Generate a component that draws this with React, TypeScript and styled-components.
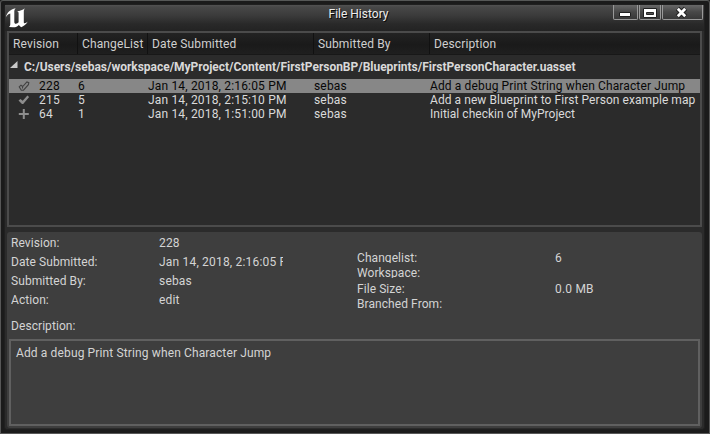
import React from 'react';
import styled, { createGlobalStyle, css } from 'styled-components';

const GlobalStyle = createGlobalStyle`
  * { box-sizing: border-box; }
  body { margin: 0; background: #1b1b1b; overflow: hidden; }
`;

const Window = styled.main`
  width: 710px;
  height: 434px;
  padding: 3px 4px 3px 3px;
  border: 1px solid #575757;
  border-top-color: #565857;
  border-radius: 3px 3px 0 0;
  background: #1b1b1b;
  color: #d4d4d4;
  font: 12px/14px Roboto, 'Liberation Sans', sans-serif;
  letter-spacing: 0.07px;
  white-space: nowrap;
`;

const Surface = styled.div`
  height: 426px;
  padding: 0 2px 1px 2px;
  border: 1px solid #202020;
  border-radius: 3px;
  background: #2b2b2b;
`;

const TitleBar = styled.header`
  display: grid;
  grid-template-columns: 1fr auto 1fr;
  height: 26px;
  margin: 0 -2px;
  background: linear-gradient(#525252 0, #484848 2px, #3a3a3a 11px, #292929 19px, #232323 100%);
`;

const Logo = styled.svg`
  width: 24px;
  height: 22px;
  margin: 2px 0 0 0;
`;

const Title = styled.h1`
  margin: 2px 0 0 8px;
  color: #ededed;
  font: inherit;
  letter-spacing: 0;
  text-shadow: 1px 1px 0 #080808;
`;

const WindowButtons = styled.div`
  display: flex;
  justify-self: end;
  gap: 1px;
  height: 16px;
  margin-right: 1px;
`;

const WindowButton = styled.button<{ $width: number }>`
  width: ${({ $width }) => $width}px;
  height: 15px;
  padding: 0;
  border: 1px solid #999;
  border-top: 0;
  border-radius: 0 0 2px 2px;
  background: linear-gradient(#686868, #484848 50%, #383838);
  svg { display: block; width: 100%; height: 14px; }
`;

const HistoryPanel = styled.section`
  height: 196px;
  border: 2px solid #4b4b4b;
  background: #2b2b2b;
`;

const columns = css`
  display: grid;
  grid-template-columns: 69px 70px 166px 116px 1fr;
`;

const TableHeader = styled.div`
  ${columns}
  height: 22px;
  border-bottom: 1px solid #181818;
  background: linear-gradient(#232323, #1a1a1a 55%, #1f1f1f);
`;

const HeaderCell = styled.div`
  padding: 4px 0 0 4px;
  border-right: 1px solid #111;
  color: #cfcfcf;
  letter-spacing: 0.13px;
  &:last-child { border-right: 0; }
`;

const FileGroup = styled.div`
  display: flex;
  height: 24px;
  padding: 5px 0 0 1px;
  color: #d9d9d9;
  font-weight: 700;
  letter-spacing: -0.02px;
  svg { width: 8px; height: 8px; margin: 1px 6px 0 0; }
`;

const HistoryRow = styled.div<{ $selected?: boolean }>`
  ${columns}
  height: 14px;
  background: ${({ $selected }) => ($selected ? '#878787' : 'transparent')};
  color: ${({ $selected }) => ($selected ? '#080808' : '#dadada')};
`;

const Cell = styled.div<{ $tracking?: number }>`
  letter-spacing: ${({ $tracking = 0.17 }) => $tracking}px;
`;

const RevisionCell = styled.div`
  display: flex;
  padding-left: 9px;
  gap: 9px;
  letter-spacing: 0.2px;
  svg { width: 12px; height: 13px; flex: none; }
`;

const DetailsPanel = styled.section`
  height: 196px;
  margin-top: 5px;
  padding: 1px 2px 2px;
  border-radius: 3px;
  background: #3e3e3e;
`;

const DetailColumns = styled.div`
  display: grid;
  grid-template-columns: 346px 1fr;
  height: 84px;
  padding-left: 2px;
`;

const LeftDetails = styled.dl`
  display: grid;
  grid-template-columns: 148px 124px;
  grid-auto-rows: 19px;
  margin: 3px 0 0;
`;

const RightDetails = styled.dl`
  display: grid;
  grid-template-columns: 198px 1fr;
  grid-template-rows: 15px 16px 15px 15px;
  align-content: start;
  margin: 18px 0 0;
`;

const Label = styled.dt<{ $clipped?: boolean }>`
  height: ${({ $clipped }) => ($clipped ? '12px' : '15px')};
  overflow: hidden;
`;

const Value = styled.dd`
  height: 15px;
  margin: 0;
  overflow: hidden;
  letter-spacing: 0.19px;
`;

const DescriptionLabel = styled.div`
  height: 22px;
  padding: 2px 0 0 2px;
`;

const DescriptionBox = styled.div`
  height: 87px;
  padding: 5px;
  border: 2px solid #606060;
  letter-spacing: 0.13px;
`;

const revisions = [
  { revision: '228', change: '6', date: 'Jan 14, 2018, 2:16:05 PM', by: 'sebas', text: 'Add a debug Print String when Character Jump', kind: 'edit', tracking: 0.13 },
  { revision: '215', change: '5', date: 'Jan 14, 2018, 2:15:10 PM', by: 'sebas', text: 'Add a new Blueprint to First Person example map', kind: 'check', tracking: 0.06 },
  { revision: '64', change: '1', date: 'Jan 14, 2018, 1:51:00 PM', by: 'sebas', text: 'Initial checkin of MyProject', kind: 'add', tracking: 0.03 },
];

function ActionIcon({ kind }: { kind: string }) {
  if (kind === 'add') {
    return <svg viewBox="0 0 12 13"><path d="M4.8 2h2v4h4v2h-4v4h-2V8H.8V6h4z" fill="#8d8d8d" /></svg>;
  }
  return (
    <svg viewBox="0 0 12 13">
      {kind === 'edit'
        ? <path d="M1.2 7.8 3 6.2l1.7 1.3 4.2-4.6 1.9.8-.4 2-4.9 5.5-2.2.1zM4.7 7.5l-.3 2" fill="none" stroke="#414141" strokeWidth="1.1" />
        : <path d="m.5 7.6 2-1.6 2.2 1.7 4.7-5.2 1.7 1.5-5.9 7H4z" fill="#8d8d8d" />}
    </svg>
  );
}

export default function App() {
  return (
    <>
      <GlobalStyle />
      <Window>
        <Surface>
          <TitleBar>
            <Logo viewBox="0 0 24 22">
              <path d="M.8 10.2C1.8 5.9 5 2.4 10.7 1.2 9.6 2.2 9.3 3.2 9.3 4.5v10.2c0 1.4.6 2 1.6 2 1.1 0 2-.5 2.7-1.4V6.1c0-1-.4-1.4-1.6-1.8 3.1-.3 5.5-1.3 8-3-.9 1.2-1.2 2.1-1.2 3.4v10.2c0 1 .3 1.4 1 1.4.9 0 1.8-.7 3-1.7-1.5 3-4 4.7-6.7 5.6l-2.3-2.3c-1.4 1.8-3.5 2.6-6 2.4l-3.9-.3c1-.8 1.4-1.5 1.4-3V6.4C3.3 6.9 1.9 8.3.8 10.2z" fill="#fff" />
            </Logo>
            <Title>File History</Title>
            <WindowButtons>
              <WindowButton $width={25} aria-label="Minimize">
                <svg><path d="M5.5 7.5h11v4h-11z" fill="#fff" stroke="#202020" /></svg>
              </WindowButton>
              <WindowButton $width={22} aria-label="Maximize">
                <svg><path d="M3.5 3.5h13v9h-13z" fill="#fff" stroke="#202020" /><path d="M6.5 7.5h7v2h-7z" fill="#555" stroke="#252525" /></svg>
              </WindowButton>
              <WindowButton $width={41} aria-label="Close">
                <svg><path d="m14.5 3.5 8 8m0-8-8 8" stroke="#202020" strokeWidth="4.8" /><path d="m14.8 3.8 7.4 7.4m0-7.4-7.4 7.4" stroke="#fff" strokeWidth="2.8" /></svg>
              </WindowButton>
            </WindowButtons>
          </TitleBar>
          <HistoryPanel>
            <TableHeader>
              {['Revision', 'ChangeList', 'Date Submitted', 'Submitted By', 'Description'].map((name) => (
                <HeaderCell key={name}>{name}</HeaderCell>
              ))}
            </TableHeader>
            <FileGroup>
              <svg viewBox="0 0 8 8"><path d="M7.5 0v7H0z" fill="#c8c8c8" /></svg>
              C:/Users/sebas/workspace/MyProject/Content/FirstPersonBP/Blueprints/FirstPersonCharacter.uasset
            </FileGroup>
            {revisions.map((item, index) => (
              <HistoryRow key={item.revision} $selected={index === 0}>
                <RevisionCell><ActionIcon kind={item.kind} />{item.revision}</RevisionCell>
                <Cell>{item.change}</Cell>
                <Cell>{item.date}</Cell>
                <Cell>{item.by}</Cell>
                <Cell $tracking={item.tracking}>{item.text}</Cell>
              </HistoryRow>
            ))}
          </HistoryPanel>
          <DetailsPanel>
            <DetailColumns>
              <LeftDetails>
                <Label>Revision:</Label><Value>228</Value>
                <Label>Date Submitted:</Label><Value>Jan 14, 2018, 2:16:05 PM</Value>
                <Label>Submitted By:</Label><Value>sebas</Value>
                <Label>Action:</Label><Value>edit</Value>
              </LeftDetails>
              <RightDetails>
                <Label $clipped>Changelist:</Label><Value>6</Value>
                <Label $clipped>Workspace:</Label><Value />
                <Label>File Size:</Label><Value>0.0 MB</Value>
                <Label>Branched From:</Label><Value />
              </RightDetails>
            </DetailColumns>
            <DescriptionLabel>Description:</DescriptionLabel>
            <DescriptionBox>Add a debug Print String when Character Jump</DescriptionBox>
          </DetailsPanel>
        </Surface>
      </Window>
    </>
  );
}
